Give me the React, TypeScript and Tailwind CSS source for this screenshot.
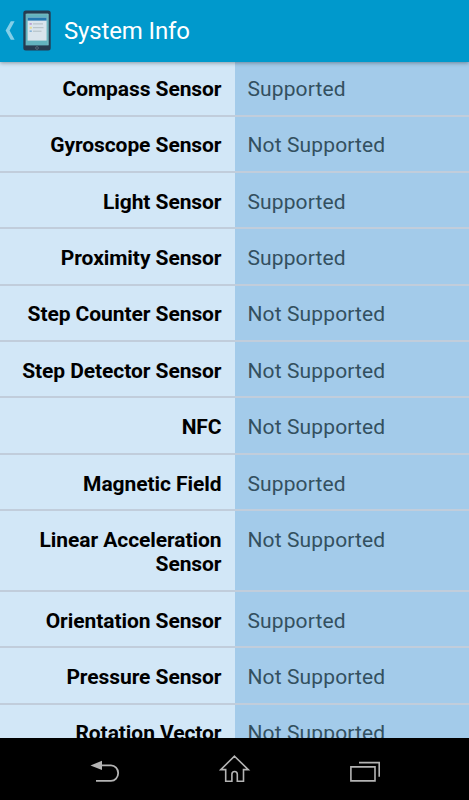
const rows: { label: string; value: string }[] = [
  { label: 'Compass Sensor', value: 'Supported' },
  { label: 'Gyroscope Sensor', value: 'Not Supported' },
  { label: 'Light Sensor', value: 'Supported' },
  { label: 'Proximity Sensor', value: 'Supported' },
  { label: 'Step Counter Sensor', value: 'Not Supported' },
  { label: 'Step Detector Sensor', value: 'Not Supported' },
  { label: 'NFC', value: 'Not Supported' },
  { label: 'Magnetic Field', value: 'Supported' },
  { label: 'Linear Acceleration Sensor', value: 'Not Supported' },
  { label: 'Orientation Sensor', value: 'Supported' },
  { label: 'Pressure Sensor', value: 'Not Supported' },
  { label: 'Rotation Vector Sensor', value: 'Not Supported' },
];

function TabletIcon() {
  return (
    <svg width="28" height="41" viewBox="0 0 28 41">
      <rect x="0.3" y="0.6" width="27.4" height="39.8" rx="2.5" fill="#263b50" />
      <rect x="2.6" y="3.8" width="23" height="31.6" fill="#62b2be" />
      <path d="M3.5 4h21.5v31" fill="none" stroke="#8cc4c8" strokeWidth="0.6" />
      <rect x="4.6" y="7.6" width="19" height="23" fill="#d9e4ec" />
      <rect x="4.6" y="7.6" width="19" height="3" fill="#2376ae" />
      <rect x="6.6" y="13" width="2.2" height="1.8" fill="#b9a1d2" />
      <rect x="6.6" y="16.8" width="2.2" height="1.8" fill="#e7d98a" />
      <rect x="6.6" y="20.4" width="2.2" height="1.6" fill="#83b2d8" />
      <path d="M10 13.9h10M10 17.7h10.5M10 21.2h8.5" stroke="#b0bdc2" strokeWidth="1" />
      <circle cx="14" cy="38" r="1.4" fill="none" stroke="#667685" strokeWidth="0.7" />
    </svg>
  );
}

function Header() {
  return (
    <header className="relative z-10 flex h-[61.5px] shrink-0 items-start bg-[#0099cc] shadow-[0_1px_4px_rgba(0,0,0,0.35)]">
      <svg className="ml-[5px] mt-[21px]" width="10" height="19" viewBox="0 0 10 19">
        <path d="M5.8 0.2H9.6L4.6 9.5 9.6 18.8H5.8L0.6 9.5Z" fill="#84cfe8" />
      </svg>
      <div className="ml-2 mt-[10px]">
        <TabletIcon />
      </div>
      <h1 className="ml-[13px] mt-[16px] text-[24px] leading-[30px] tracking-[-0.15px] text-white">System Info</h1>
    </header>
  );
}

function NavBar() {
  return (
    <nav className="flex h-[62px] shrink-0 items-start bg-black pt-[15px]">
      <svg className="ml-[90px]" width="31" height="32" viewBox="0 0 31 32">
        <path d="M0.5 12.5 12 7.7V17Z" fill="#b4b4b4" />
        <path d="M11 12.4h10a7.1 7.6 0 0 1 0 15.4H6" fill="none" stroke="#b4b4b4" strokeWidth="1.8" />
      </svg>
      <svg className="ml-[98px]" width="32" height="30" viewBox="0 0 32 30">
        <path
          d="M15.5 3.2 29.3 16.6H24.5V28.2H18.3V21.2a2.7 2.7 0 0 0-5.4 0V28.2H6.7V16.6H1.7Z"
          fill="none"
          stroke="#b4b4b4"
          strokeWidth="1.6"
        />
      </svg>
      <svg className="ml-[98px]" width="32" height="30" viewBox="0 0 32 30">
        <path d="M1.9 13.9H26V27.9H1.9ZM10 9.6H30.2V23.8" fill="none" stroke="#b4b4b4" strokeWidth="1.6" />
      </svg>
    </nav>
  );
}

export default function App() {
  return (
    <div className="flex h-[800px] w-[469px] flex-col overflow-hidden bg-black font-[Roboto,sans-serif]">
      <Header />
      <main className="-mt-[1.3px] min-h-0 flex-1 overflow-hidden">
        {rows.map((row) => (
          <div
            key={row.label}
            className="grid grid-cols-2 border-b-2 border-[#c1cddb] text-[21px] leading-[24.3px]"
          >
            <div className="bg-[#d2e7f7] pb-[13.4px] pl-3 pr-[13px] pt-[16.7px] text-right font-bold tracking-[-0.07px] text-black">
              {row.label}
            </div>
            <div className="bg-[#a3cbea] pb-[13.4px] pl-[13px] pt-[16.7px] tracking-[0.12px] text-[#33505f]">
              {row.value}
            </div>
          </div>
        ))}
      </main>
      <NavBar />
    </div>
  );
}
